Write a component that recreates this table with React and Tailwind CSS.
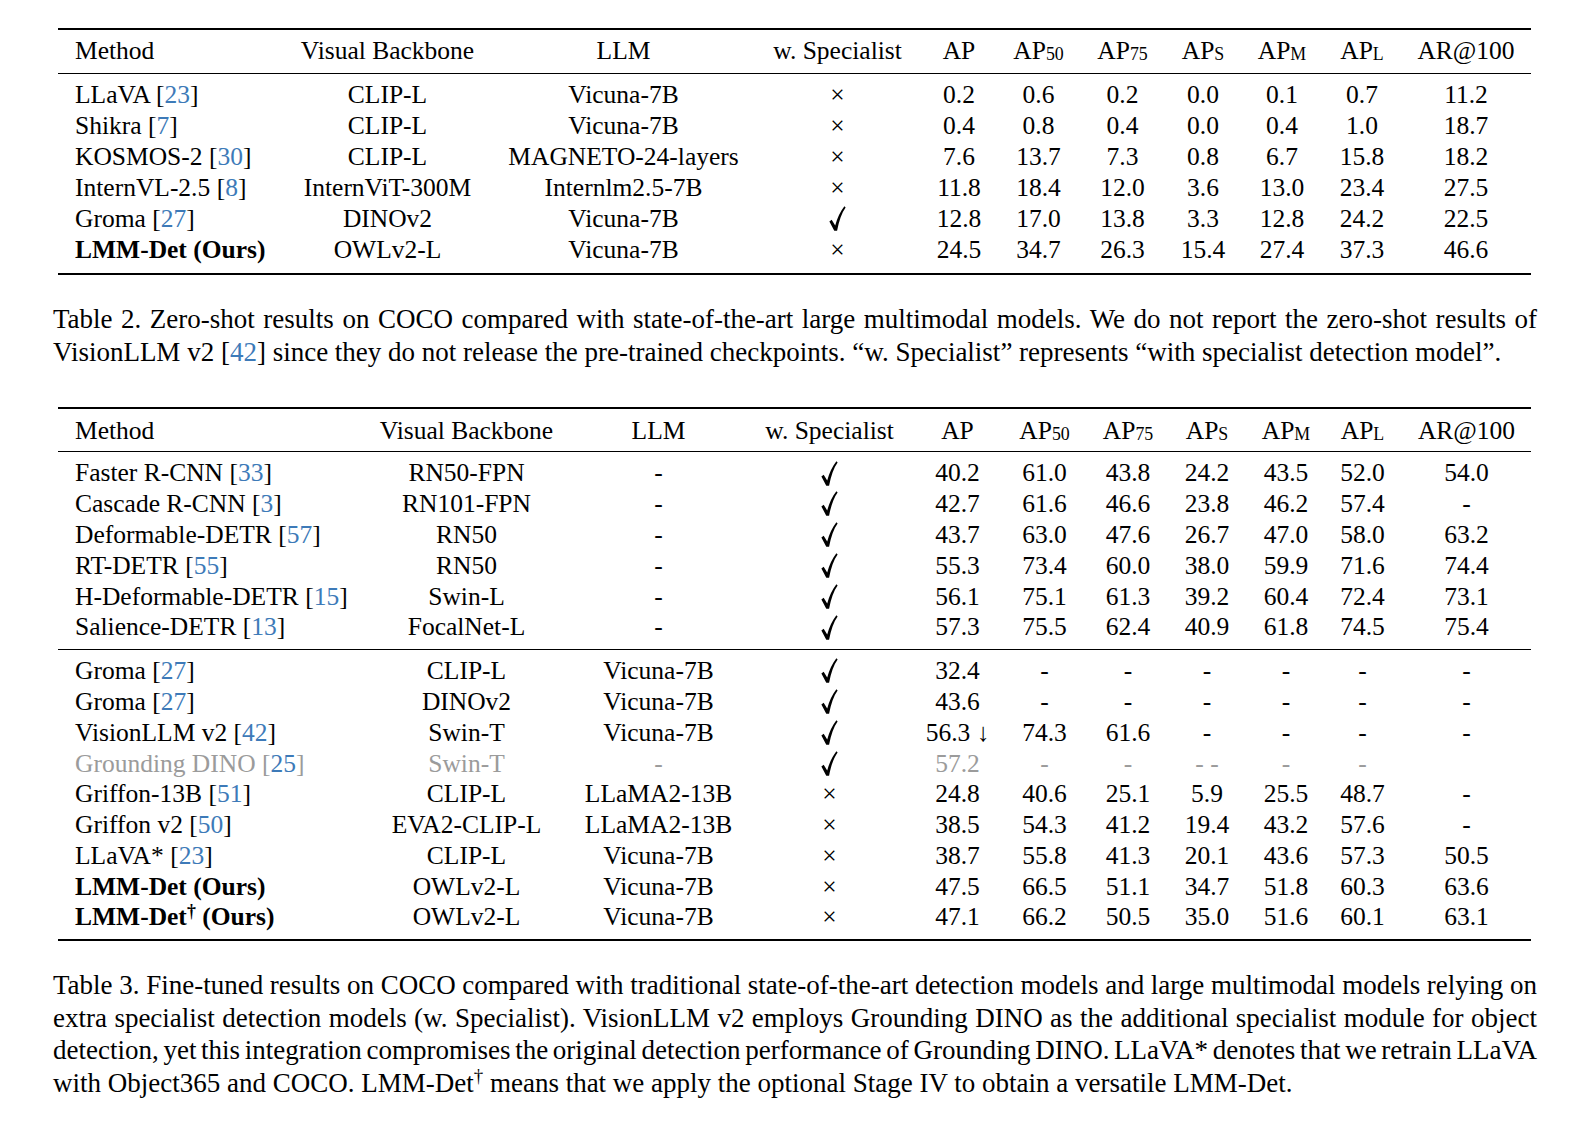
import React from "react";

const Cite = ({ n }) => (
  <>
    [<span className="text-[#3d7ab8]">{n}</span>]
  </>
);

const Check = () => (
  <svg viewBox="0 0 16 24" className="inline-block w-[17px] h-[25px]" aria-hidden="true">
    <path
      d="M0.2 14.8 L2.4 13.2 L5.8 18.6 C7.8 11.6 10.6 5.4 14.6 0.3 L15.8 1.4 C12.0 6.8 9.4 14.2 7.6 23.7 L4.9 23.7 Z"
      fill="currentColor"
    />
  </svg>
);

const X = () => <span>×</span>;

const Sub = ({ children }) => (
  <sub className="text-[0.7em] leading-none">{children}</sub>
);

const T2COLS = "grid grid-cols-[224px_211px_261px_167px_76px_83px_85px_76px_82px_78px_130px] h-[31px] leading-none items-center";
const T3COLS = "grid grid-cols-[300px_217px_167px_175px_81px_93px_74px_84px_74px_79px_129px] h-[30.8px] leading-none items-center";

function Row({ cols, cells }) {
  return (
    <div className={cols}>
      {cells.map((c, i) =>
        i === 0 ? (
          <div key={i} className="pl-[17px] whitespace-nowrap">
            {c}
          </div>
        ) : (
          <div key={i} className="flex justify-center items-center whitespace-nowrap">
            {c}
          </div>
        )
      )}
    </div>
  );
}

const header = [
  "Method",
  "Visual Backbone",
  "LLM",
  "w. Specialist",
  "AP",
  <>AP<Sub>50</Sub></>,
  <>AP<Sub>75</Sub></>,
  <>AP<Sub>S</Sub></>,
  <>AP<Sub>M</Sub></>,
  <>AP<Sub>L</Sub></>,
  "AR@100",
];

const t2rows = [
  [<>LLaVA <Cite n="23" /></>, "CLIP-L", "Vicuna-7B", <X />, "0.2", "0.6", "0.2", "0.0", "0.1", "0.7", "11.2"],
  [<>Shikra <Cite n="7" /></>, "CLIP-L", "Vicuna-7B", <X />, "0.4", "0.8", "0.4", "0.0", "0.4", "1.0", "18.7"],
  [<>KOSMOS-2 <Cite n="30" /></>, "CLIP-L", "MAGNETO-24-layers", <X />, "7.6", "13.7", "7.3", "0.8", "6.7", "15.8", "18.2"],
  [<>InternVL-2.5 <Cite n="8" /></>, "InternViT-300M", "Internlm2.5-7B", <X />, "11.8", "18.4", "12.0", "3.6", "13.0", "23.4", "27.5"],
  [<>Groma <Cite n="27" /></>, "DINOv2", "Vicuna-7B", <Check />, "12.8", "17.0", "13.8", "3.3", "12.8", "24.2", "22.5"],
  [<span className="font-bold">LMM-Det (Ours)</span>, "OWLv2-L", "Vicuna-7B", <X />, "24.5", "34.7", "26.3", "15.4", "27.4", "37.3", "46.6"],
];

const t3a = [
  [<>Faster R-CNN <Cite n="33" /></>, "RN50-FPN", "-", <Check />, "40.2", "61.0", "43.8", "24.2", "43.5", "52.0", "54.0"],
  [<>Cascade R-CNN <Cite n="3" /></>, "RN101-FPN", "-", <Check />, "42.7", "61.6", "46.6", "23.8", "46.2", "57.4", "-"],
  [<>Deformable-DETR <Cite n="57" /></>, "RN50", "-", <Check />, "43.7", "63.0", "47.6", "26.7", "47.0", "58.0", "63.2"],
  [<>RT-DETR <Cite n="55" /></>, "RN50", "-", <Check />, "55.3", "73.4", "60.0", "38.0", "59.9", "71.6", "74.4"],
  [<>H-Deformable-DETR <Cite n="15" /></>, "Swin-L", "-", <Check />, "56.1", "75.1", "61.3", "39.2", "60.4", "72.4", "73.1"],
  [<>Salience-DETR <Cite n="13" /></>, "FocalNet-L", "-", <Check />, "57.3", "75.5", "62.4", "40.9", "61.8", "74.5", "75.4"],
];

const G = ({ children }) => <span className="text-[#9b9b9b]">{children}</span>;

const t3b = [
  [<>Groma <Cite n="27" /></>, "CLIP-L", "Vicuna-7B", <Check />, "32.4", "-", "-", "-", "-", "-", "-"],
  [<>Groma <Cite n="27" /></>, "DINOv2", "Vicuna-7B", <Check />, "43.6", "-", "-", "-", "-", "-", "-"],
  [<>VisionLLM v2 <Cite n="42" /></>, "Swin-T", "Vicuna-7B", <Check />, <>56.3 ↓</>, "74.3", "61.6", "-", "-", "-", "-"],
  [
    <G>Grounding DINO <Cite n="25" /></G>,
    <G>Swin-T</G>,
    <G>-</G>,
    <Check />,
    <G>57.2</G>,
    <G>-</G>,
    <G>-</G>,
    <G>- -</G>,
    <G>-</G>,
    <G>-</G>,
    "",
  ],
  [<>Griffon-13B <Cite n="51" /></>, "CLIP-L", "LLaMA2-13B", <X />, "24.8", "40.6", "25.1", "5.9", "25.5", "48.7", "-"],
  [<>Griffon v2 <Cite n="50" /></>, "EVA2-CLIP-L", "LLaMA2-13B", <X />, "38.5", "54.3", "41.2", "19.4", "43.2", "57.6", "-"],
  [<>LLaVA* <Cite n="23" /></>, "CLIP-L", "Vicuna-7B", <X />, "38.7", "55.8", "41.3", "20.1", "43.6", "57.3", "50.5"],
  [<span className="font-bold">LMM-Det (Ours)</span>, "OWLv2-L", "Vicuna-7B", <X />, "47.5", "66.5", "51.1", "34.7", "51.8", "60.3", "63.6"],
  [
    <span className="font-bold">
      LMM-Det<sup className="text-[0.7em]">†</sup> (Ours)
    </span>,
    "OWLv2-L",
    "Vicuna-7B",
    <X />,
    "47.1",
    "66.2",
    "50.5",
    "35.0",
    "51.6",
    "60.1",
    "63.1",
  ],
];

const Line = ({ children, last }) => (
  <div
    className={
      last
        ? "text-left whitespace-nowrap"
        : "text-justify [text-align-last:justify] [word-spacing:-3px] whitespace-nowrap"
    }
  >
    {children}
  </div>
);

export default function App() {
  return (
    <div className="bg-white w-[1593px] min-h-[1129px] pl-[53px] pt-[28px] text-black font-['Liberation_Serif','Times_New_Roman',serif]">
      {/* Table 2 */}
      <div className="ml-[5px] w-[1473px] text-[25.5px] border-t-2 border-b-2 border-black">
        <div className="pt-[5px] pb-[6.5px] border-b border-black">
          <Row cols={T2COLS} cells={header} />
        </div>
        <div className="pt-[5.5px] pb-[7.5px]">
          {t2rows.map((r, i) => (
            <Row key={i} cols={T2COLS} cells={r} />
          ))}
        </div>
      </div>

      {/* Caption 2 */}
      <div className="mt-[28px] w-[1484px] text-[27px] leading-[33.5px]">
        <Line>
          Table 2. Zero-shot results on COCO compared with state-of-the-art large multimodal models. We do not report the zero-shot results of
        </Line>
        <Line last>
          VisionLLM v2 <Cite n="42" /> since they do not release the pre-trained checkpoints. “w. Specialist” represents “with specialist detection model”.
        </Line>
      </div>

      {/* Table 3 */}
      <div className="mt-[37.5px] ml-[5px] w-[1473px] text-[25.5px] border-t-2 border-b-2 border-black">
        <div className="pt-[6px] pb-[5px] border-b border-black">
          <Row cols={T3COLS} cells={header} />
        </div>
        <div className="pt-[6px] pb-[6.4px] border-b border-black">
          {t3a.map((r, i) => (
            <Row key={i} cols={T3COLS} cells={r} />
          ))}
        </div>
        <div className="pt-[5.5px] pb-[6.5px]">
          {t3b.map((r, i) => (
            <Row key={i} cols={T3COLS} cells={r} />
          ))}
        </div>
      </div>

      {/* Caption 3 */}
      <div className="mt-[28px] w-[1484px] text-[27px] leading-[32.5px]">
        <Line>
          Table 3. Fine-tuned results on COCO compared with traditional state-of-the-art detection models and large multimodal models relying on
        </Line>
        <Line>
          extra specialist detection models (w. Specialist). VisionLLM v2 employs Grounding DINO as the additional specialist module for object
        </Line>
        <Line>
          detection, yet this integration compromises the original detection performance of Grounding DINO. LLaVA* denotes that we retrain LLaVA
        </Line>
        <Line last>
          with Object365 and COCO. LMM-Det<sup className="text-[0.7em]">†</sup> means that we apply the optional Stage IV to obtain a versatile LMM-Det.
        </Line>
      </div>
    </div>
  );
}
